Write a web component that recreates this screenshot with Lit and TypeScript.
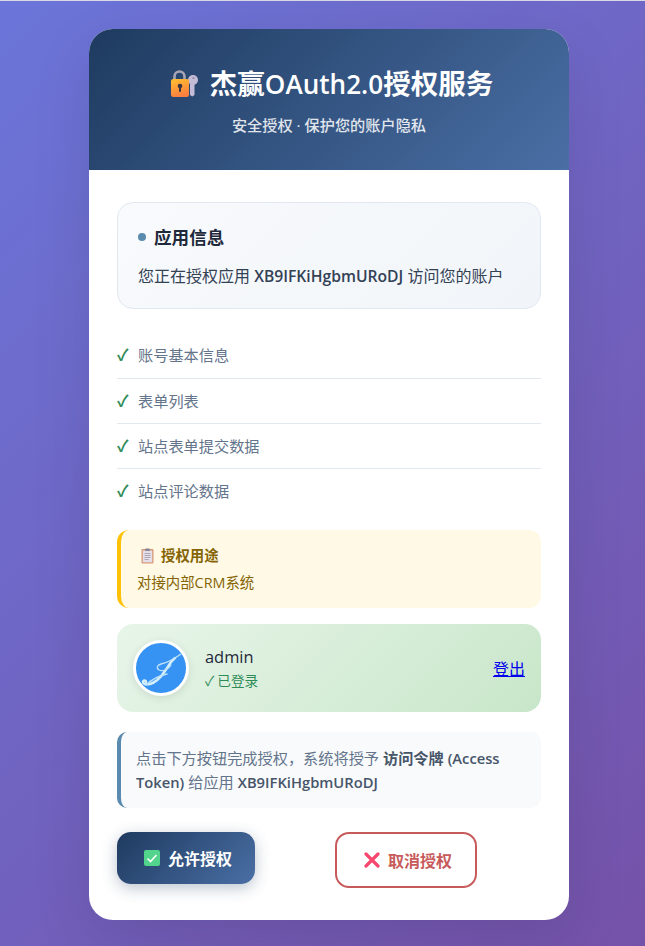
import { LitElement, css, html } from 'lit';
import { customElement } from 'lit/decorators.js';

const APP_ID = 'XB9IFKiHgbmURoDJ';
const SCOPES = ['账号基本信息', '表单列表', '站点表单提交数据', '站点评论数据'];

const lockIcon = html`<svg class="lock" viewBox="0 0 28 28" aria-hidden="true">
  <defs>
    <linearGradient id="lockBody" x1="0" y1="0" x2="0.3" y2="1">
      <stop offset="0" stop-color="#ffc02e" />
      <stop offset="1" stop-color="#fb8040" />
    </linearGradient>
  </defs>
  <path d="M4.500 10V6.500a5 5 0 0 1 10 0V10" fill="none" stroke="#a9a4b4" stroke-width="2.600" />
  <path d="M20 13v12l2.300 1.500 2.200-1.500V13z" fill="#c4bbd6" />
  <circle cx="23" cy="10" r="5" fill="#c4bbd6" />
  <circle cx="23.500" cy="8" r="1.100" fill="#8f88a0" />
  <rect x="1" y="9" width="18" height="18" rx="2.200" fill="url(#lockBody)" />
  <circle cx="10" cy="16" r="2.300" fill="#3a3440" />
  <rect x="9" y="16" width="2" height="6" rx="1" fill="#3a3440" />
</svg>`;

const clipboardIcon = html`<svg class="clip" viewBox="0 0 14 16" aria-hidden="true">
  <rect x="1" y="1" width="12" height="14.500" rx="1" fill="#d99a78" />
  <rect x="2.300" y="2.500" width="9.400" height="11.800" fill="#e4dee8" />
  <rect x="4.500" y="0.500" width="5" height="2.500" rx="0.800" fill="#8d8597" />
  <path d="M4 5.500h6M4 7.500h6M4 9.500h6M4 11.500h4" stroke="#a89fb0" stroke-width="0.900" />
</svg>`;

// flourish monogram of the avatar picture
const avatarMark = html`<svg class="avatar-mark" viewBox="0 0 50 50" aria-hidden="true">
  <path
    d="M39 15C34 19 32 24 29 28C25 34 21 39 14 41C10 42 7 41 7 39C7 37 10 37 10 39"
    fill="none"
    stroke="#d5effc"
    stroke-width="2.400"
    stroke-linecap="round"
  />
  <path
    d="M45 11C38 16 31 20 25 21C21 22 20 25 23 27C27 29 33 26 35 22M10 42C16 36 22 33 31 31"
    fill="none"
    stroke="#bfe3fa"
    stroke-width="1.300"
    stroke-linecap="round"
  />
</svg>`;

const allowIcon = html`<svg class="btn-icon" viewBox="0 0 16 16" aria-hidden="true">
  <rect width="16" height="16" rx="2" fill="#52d48c" />
  <path d="M3.500 8.500l3 3 6-6.500" fill="none" stroke="#fff" stroke-width="1.600" />
</svg>`;

const denyIcon = html`<svg class="btn-icon" viewBox="0 0 16 16" aria-hidden="true">
  <path d="M2 2l12 12M14 2L2 14" fill="none" stroke="#f7486f" stroke-width="3.200" stroke-linecap="round" />
</svg>`;

@customElement('app-root')
export class AppRoot extends LitElement {
  static override styles = css`
    :host {
      display: block;
      min-height: 946px;
      box-sizing: border-box;
      padding: 28px 0 26px;
      border-top: 1px solid #d9d9e6;
      background: linear-gradient(135deg, #6b75d9 0%, #7552a9 100%);
      font-family: 'Open Sans', 'Noto Sans CJK SC', sans-serif;
    }

    .card {
      width: 480px;
      margin-left: 89px;
      background: #fff;
      border-radius: 24px;
      overflow: hidden;
      box-shadow: 0 20px 60px rgba(0, 0, 0, 0.1);
    }

    .header {
      height: 141px;
      box-sizing: border-box;
      padding-top: 36px;
      text-align: center;
      color: #fff;
      background: linear-gradient(135deg, #1e3a5f 0%, #4a6fa5 100%);
    }

    .title {
      margin: 0;
      padding-left: 5px;
      display: flex;
      justify-content: center;
      align-items: center;
      gap: 12px;
      font-size: 27.500px;
      line-height: 38px;
      font-weight: 600;
    }

    .lock {
      width: 28px;
      height: 28px;
    }

    /* latin runs sit a little narrower than the open sans default */
    .lat {
      font-size: 0.95em;
    }

    .subtitle {
      margin-top: 12px;
      font-size: 15.200px;
      line-height: 20px;
      font-weight: 500;
      opacity: 0.85;
    }

    .content {
      padding: 32px 28px;
    }

    .app-info {
      box-sizing: border-box;
      height: 107px;
      padding: 19px 20px 20px;
      background: linear-gradient(135deg, #f8fafc 0%, #f1f5f9 100%);
      border: 1px solid #e2e8f0;
      border-radius: 16px;
      color: #1e293b;
    }

    .app-title {
      display: flex;
      align-items: center;
      gap: 8px;
      font-size: 17.600px;
      line-height: 30px;
      font-weight: 700;
    }

    .dot {
      width: 8px;
      height: 8px;
      border-radius: 50%;
      background: #5a8aad;
    }

    .app-desc {
      margin-top: 13px;
      font-size: 16px;
      line-height: 22px;
      color: #334155;
    }

    .app-desc strong {
      font-size: 0.98em;
      font-weight: 600;
    }

    .scopes {
      list-style: none;
      margin: 25px 0 0;
      padding: 0;
    }

    .scopes li {
      display: flex;
      align-items: center;
      gap: 8px;
      height: 45px;
      padding-bottom: 2px;
      box-sizing: border-box;
      font-size: 15.200px;
      color: #64748b;
      border-bottom: 1px solid #e2e8f0;
    }

    .scopes li:first-child {
      padding-bottom: 4px;
    }

    .scopes li:last-child {
      border-bottom-color: transparent;
    }

    .tick {
      width: 13px;
      font-size: 16px;
      font-weight: 700;
      color: #2e8b57;
    }

    .purpose {
      box-sizing: border-box;
      height: 78px;
      margin-top: 16px;
      padding: 14px 16px;
      background: #fff9e5;
      border-left: 4px solid #ffc107;
      border-radius: 12px;
      color: #856404;
    }

    .purpose-title {
      display: flex;
      align-items: center;
      gap: 6px;
      font-size: 14.400px;
      line-height: 24px;
      font-weight: 700;
    }

    .clip {
      width: 15px;
      height: 16px;
      margin-left: 3px;
    }

    .purpose-text {
      margin-top: 5px;
      font-size: 14.400px;
      line-height: 20px;
    }

    .user {
      box-sizing: border-box;
      height: 88px;
      margin-top: 16px;
      padding: 0 16px;
      display: flex;
      align-items: center;
      gap: 16px;
      background: linear-gradient(135deg, #e8f5e9 0%, #c8e6c9 100%);
      border-radius: 16px;
    }

    .avatar {
      width: 50px;
      height: 50px;
      flex: none;
      border: 3px solid #fff;
      border-radius: 50%;
      background: #3693f3;
      box-shadow: 0 2px 8px rgba(0, 0, 0, 0.1);
    }

    .avatar-mark {
      display: block;
      width: 50px;
      height: 50px;
    }

    .user-meta {
      flex: 1;
    }

    .user-name {
      font-size: 16.400px;
      line-height: 22px;
      font-weight: 500;
      color: #1e293b;
    }

    .user-status {
      margin-top: 3px;
      font-size: 13.600px;
      line-height: 20px;
      color: #2e8b57;
    }

    .user-status span {
      margin-right: 3px;
      font-weight: 400;
    }

    .logout {
      font-size: 16px;
      color: #0000ee;
      text-decoration: underline;
    }

    .note {
      box-sizing: border-box;
      height: 76px;
      margin: 20px 0 0;
      padding: 14px 15px;
      background: #f8fafc;
      border-left: 4px solid #5a8aad;
      border-radius: 10px;
      font-size: 15.200px;
      line-height: 24px;
      color: #64748b;
    }

    .note strong {
      font-weight: 600;
      color: #475569;
    }

    .note .lat {
      font-size: 0.97em;
    }

    .actions {
      margin-top: 24px;
      display: flex;
      align-items: flex-start;
      gap: 80px;
    }

    .btn {
      box-sizing: border-box;
      height: 56px;
      padding: 0 0 0 4px;
      display: flex;
      align-items: center;
      justify-content: center;
      gap: 8px;
      font-family: inherit;
      font-size: 16px;
      font-weight: 700;
      border-radius: 14px;
      cursor: pointer;
    }

    .btn-icon {
      width: 16px;
      height: 16px;
    }

    .allow {
      width: 138px;
      height: 52px;
      border: none;
      color: #fff;
      background: linear-gradient(135deg, #1e3a5f 0%, #4a6fa5 100%);
      box-shadow: 0 4px 15px rgba(30, 58, 95, 0.3);
    }

    .deny {
      width: 142px;
      border: 2px solid #c75b5b;
      color: #c75b5b;
      background: #fff;
    }
  `;

  override render() {
    return html`
      <div class="card">
        <div class="header">
          <h1 class="title">${lockIcon}<span>杰赢<span class="lat">OAuth2.0</span>授权服务</span></h1>
          <div class="subtitle">安全授权 · 保护您的账户隐私</div>
        </div>
        <div class="content">
          <section class="app-info">
            <div class="app-title"><span class="dot"></span>应用信息</div>
            <div class="app-desc">您正在授权应用 <strong>${APP_ID}</strong> 访问您的账户</div>
          </section>

          <ul class="scopes">
            ${SCOPES.map((s) => html`<li><span class="tick">✓</span>${s}</li>`)}
          </ul>

          <section class="purpose">
            <div class="purpose-title">${clipboardIcon}授权用途</div>
            <div class="purpose-text">对接内部CRM系统</div>
          </section>

          <section class="user">
            <div class="avatar">${avatarMark}</div>
            <div class="user-meta">
              <div class="user-name">admin</div>
              <div class="user-status"><span>✓</span>已登录</div>
            </div>
            <a class="logout" href="#">登出</a>
          </section>

          <p class="note">
            点击下方按钮完成授权，系统将授予 <strong>访问令牌 <span class="lat">(Access</span></strong>
            <strong class="lat">Token)</strong> 给应用
            <strong class="lat">${APP_ID}</strong>
          </p>

          <div class="actions">
            <button class="btn allow">${allowIcon}允许授权</button>
            <button class="btn deny">${denyIcon}取消授权</button>
          </div>
        </div>
      </div>
    `;
  }
}
